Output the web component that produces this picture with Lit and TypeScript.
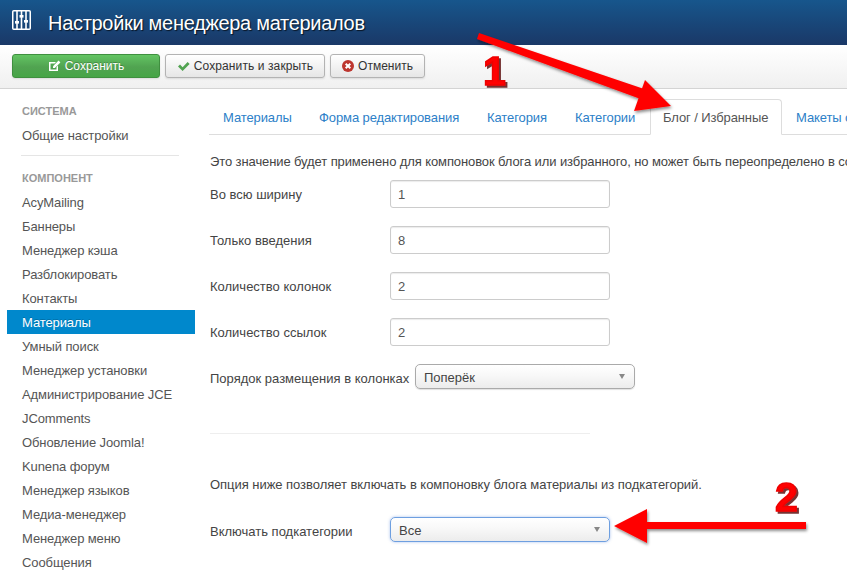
import { LitElement, html, css, svg } from "lit";
import { customElement } from "lit/decorators.js";

const items = ["AcyMailing","Баннеры","Менеджер кэша","Разблокировать","Контакты","Материалы","Умный поиск","Менеджер установки","Администрирование JCE","JComments","Обновление Joomla!","Kunena форум","Менеджер языков","Медиа-менеджер","Менеджер меню","Сообщения"];
const tabs = ["Материалы","Форма редактирования","Категория","Категории","Блог / Избранные","Макеты списков"];
const fields: [string,string][] = [["Во всю ширину","1"],["Только введения","8"],["Количество колонок","2"],["Количество ссылок","2"]];

@customElement("app-root")
export class AppRoot extends LitElement {
  static styles = css`
    :host { display:block; position:relative; width:847px; height:577px; overflow:hidden; background:#fff;
      font-family:"Liberation Sans",Arial,sans-serif; font-size:13px; line-height:18px; color:#555; }
    .head { height:45px; box-sizing:border-box; background:linear-gradient(#17568c,#1a3867); display:flex; align-items:center; padding:0 0 0 12px; gap:17px; }
    .head svg { display:block; margin-top:-5px; }
    .head h1 { margin:0; font-size:20px; font-weight:400; color:#fff; line-height:24px; letter-spacing:-.3px; text-shadow:1px 1px 1px rgba(0,0,0,.7); white-space:nowrap; }
    .bar { height:44px; box-sizing:border-box; background:linear-gradient(#fff,#f0f0f0); border-bottom:1px solid #d4d4d4; padding:9px 12px 0; display:flex; gap:5px; align-items:flex-start; }
    .btn { height:24px; box-sizing:border-box; border:1px solid #b3b3b3; border-radius:3px; background:linear-gradient(#fff,#e6e6e6); color:#333; font-size:12px; line-height:22px; display:flex; align-items:center; justify-content:center; gap:4px; box-shadow:0 1px 2px rgba(0,0,0,.1); white-space:nowrap; }
    .btn.save { width:148px; background:linear-gradient(#62c462,#51a351 55%,#46a546); border-color:#3f8f3f; color:#fff; text-shadow:0 -1px 0 rgba(0,0,0,.25); }
    .btn.close { width:160px; letter-spacing:.1px; }
    .btn.cancel { width:95px; }
    .main { display:flex; align-items:flex-start; }
    .side { width:188px; margin-left:7px; flex:none; padding-top:10px; letter-spacing:-.1px; }
    .side .h { padding-left:15px; height:24px; line-height:24px; font-size:11px; font-weight:700; color:#999; letter-spacing:0; }
    .side .i { padding-left:15px; height:24px; line-height:26px; color:#555; white-space:nowrap; }
    .side .i.on { background:#0088cc; color:#fff; text-shadow:0 -1px 0 rgba(0,0,0,.2); }
    .side .d { height:1px; background:#e5e5e5; margin:8px 16px 10px 14px; }
    .content { margin-left:14px; flex:1; min-width:0; padding-top:10px; }
    .tabs { display:flex; height:36px; box-sizing:border-box; border-bottom:1px solid #ddd; width:638px; letter-spacing:-.1px; }
    .tab { height:36px; box-sizing:border-box; padding:0 0 0 14px; line-height:38px; color:#2c80c8; white-space:nowrap; flex:none; }
    .tab:nth-child(1) { width:96px; }
    .tab:nth-child(2) { width:168px; }
    .tab:nth-child(3), .tab:nth-child(4) { width:88px; }
    .tab:nth-child(5) { width:132px; }
    .tab.on { background:#fff; border:1px solid #ddd; border-bottom-color:#fff; border-radius:4px 4px 0 0; color:#555; line-height:36px; padding-left:12px; margin-left:1px; }
    .pane { padding:0 0 0 1px; }
    .intro { margin:18px 0 0; height:18px; white-space:nowrap; color:#444; letter-spacing:-.1px; }
    .row { display:flex; align-items:center; height:28px; margin-top:18px; color:#444; white-space:nowrap; }
    .intro + .row { margin-top:9px; }
    .row label { width:180px; flex:none; padding-top:2px; }
    .inp { width:220px; height:28px; box-sizing:border-box; border:1px solid #ccc; border-radius:3px; padding:0 7px; line-height:28px; color:#555; background:#fff; box-shadow:inset 0 1px 1px rgba(0,0,0,.08); }
    .sel { height:25px; box-sizing:border-box; border:1px solid #aaa; border-radius:5px; background:linear-gradient(#fff,#f8f8f8 45%,#ececec); box-shadow:0 1px 1px rgba(0,0,0,.12); display:flex; align-items:center; justify-content:space-between; padding:0 8px; color:#444; }
    .sel span { padding-top:3px; }
    .sel i { width:0; height:0; border:3.5px solid transparent; border-top:5px solid #888; border-bottom:0; margin-right:1px; }
    .sel.a { width:220px; }
    .sel.b { width:220px; border-color:#6e9fe0; box-shadow:0 0 3px rgba(82,130,220,.5); }
    .rowa { margin-top:18px; height:25px; }
    .rowa label { width:205px; padding-top:5px; }
    hr { width:380px; margin:44px 0 0; border:0; border-top:1px solid #eee; }
    .t2 { margin:42px 0 0; height:18px; color:#444; white-space:nowrap; letter-spacing:-.04px; }
    .t2 + .row { margin-top:23px; height:25px; }
    .t2 + .row label { padding-top:4px; }
    .over { position:absolute; left:0; top:0; pointer-events:none; }
    .num { font-family:"Liberation Sans",Arial,sans-serif; font-weight:700; font-size:41px; fill:#f00; stroke:#e00; stroke-width:1.5px; }
  `;

  render() {
    return html`
      <div class="head">
        <svg width="19" height="20" viewBox="0 0 19 20">
          <rect x=".75" y=".75" width="17.5" height="18.5" rx="1" fill="none" stroke="#fff" stroke-width="1.5"/>
          <g stroke="#fff" stroke-width="1.6" fill="none"><path d="M5 1v18M9.5 1v18M14 1v18"/></g>
          <rect x="3" y="11" width="4" height="2.6" fill="#fff"/><rect x="7.5" y="5" width="4" height="2.6" fill="#fff"/><rect x="12" y="10" width="4" height="2.6" fill="#fff"/>
        </svg>
        <h1>Настройки менеджера материалов</h1>
      </div>
      <div class="bar">
        <div class="btn save">
          <svg width="13" height="12" viewBox="0 0 13 12"><path d="M1 2h7L6.5 3.5H2.5v6h6V7L10 5.5V11H1z" fill="#fff"/><path d="M5 6.2 10.6.6l1.8 1.8L6.8 8H5z" fill="#fff"/></svg>
          <span>Сохранить</span>
        </div>
        <div class="btn close">
          <svg width="13" height="11" viewBox="0 0 13 11"><path d="M1 5.5 3 3.6l2.6 2.6L10.6 1l2 2-7 7z" fill="#51a351"/></svg>
          <span>Сохранить и закрыть</span>
        </div>
        <div class="btn cancel">
          <svg width="12" height="12" viewBox="0 0 12 12"><circle cx="6" cy="6" r="6" fill="#bd362f"/><path d="M3.7 3.7l4.6 4.6M8.3 3.7 3.7 8.3" stroke="#fff" stroke-width="2"/></svg>
          <span>Отменить</span>
        </div>
      </div>
      <div class="main">
        <div class="side">
          <div class="h">СИСТЕМА</div>
          <div class="i">Общие настройки</div>
          <div class="d"></div>
          <div class="h">КОМПОНЕНТ</div>
          ${items.map(t => html`<div class="i ${t === "Материалы" ? "on" : ""}">${t}</div>`)}
        </div>
        <div class="content">
          <div class="tabs">
            ${tabs.map(t => html`<div class="tab ${t.startsWith("Блог") ? "on" : ""}">${t}</div>`)}
          </div>
          <div class="pane">
            <div class="intro">Это значение будет применено для компоновок блога или избранного, но может быть переопределено в соответствующих настройках меню</div>
            ${fields.map(([l, v]) => html`<div class="row"><label>${l}</label><div class="inp">${v}</div></div>`)}
            <div class="row rowa"><label>Порядок размещения в колонках</label><div class="sel a"><span>Поперёк</span><i></i></div></div>
            <hr />
            <div class="t2">Опция ниже позволяет включать в компоновку блога материалы из подкатегорий.</div>
            <div class="row"><label>Включать подкатегории</label><div class="sel b"><span>Все</span><i></i></div></div>
          </div>
        </div>
      </div>
      <svg class="over" width="847" height="577" viewBox="0 0 847 577">
        <defs>
          <filter id="s" x="-30%" y="-30%" width="160%" height="160%"><feDropShadow dx="1" dy="2" stdDeviation="1.5" flood-color="#000" flood-opacity=".45"/></filter>
          <filter id="n" x="-40%" y="-30%" width="180%" height="160%">
            <feDropShadow dx="2" dy="2" stdDeviation=".7" flood-color="#500" flood-opacity=".8"/>
          </filter>
        </defs>
        ${svg`
          <g filter="url(#s)" fill="#f00">
            <path d="M479 33 477 39 646 101 650 91Z"/>
            <path d="M671 106 634 111 645 80Z"/>
            <path d="M806 522V529H647V543L614 526 647 509V522Z"/>
          </g>
          <text class="num" x="483" y="85" filter="url(#n)">1</text>
          <text class="num" x="775" y="511" filter="url(#n)">2</text>
        `}
      </svg>
    `;
  }
}
